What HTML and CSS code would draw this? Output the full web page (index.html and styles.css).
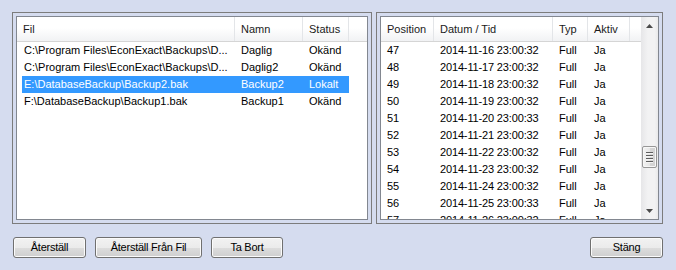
FILE: index.html
```html
<!DOCTYPE html>
<html>
<head>
<meta charset="utf-8">
<link rel="stylesheet" href="styles.css">
</head>
<body>
<div class="window">
  <div class="panels">
    <div class="panel panel-left">
      <div class="list">
        <div class="header">
          <div class="hcell l1">Fil</div>
          <div class="hcell l2">Namn</div>
          <div class="hcell l3">Status</div>
          <div class="hfill"></div>
        </div>
        <div class="rows left-rows">
          <div class="row"><div class="cell r1">C:\Program Files\EconExact\Backups\D...</div><div class="cell r2">Daglig</div><div class="cell r3">Okänd</div></div>
          <div class="row"><div class="cell r1">C:\Program Files\EconExact\Backups\D...</div><div class="cell r2">Daglig2</div><div class="cell r3">Okänd</div></div>
          <div class="row selected"><div class="cell r1">E:\DatabaseBackup\Backup2.bak</div><div class="cell r2">Backup2</div><div class="cell r3">Lokalt</div></div>
          <div class="row"><div class="cell r1">F:\DatabaseBackup\Backup1.bak</div><div class="cell r2">Backup1</div><div class="cell r3">Okänd</div></div>
        </div>
      </div>
    </div>
    <div class="panel panel-right">
      <div class="list list-scroll">
        <div class="list-main">
          <div class="header">
            <div class="hcell p1">Position</div>
            <div class="hcell p2">Datum / Tid</div>
            <div class="hcell p3">Typ</div>
            <div class="hcell p4">Aktiv</div>
            <div class="hfill"></div>
          </div>
          <div class="rows right-rows">
            <div class="row"><div class="cell c1">47</div><div class="cell c2">2014-11-16 23:00:32</div><div class="cell c3">Full</div><div class="cell c4">Ja</div></div>
            <div class="row"><div class="cell c1">48</div><div class="cell c2">2014-11-17 23:00:32</div><div class="cell c3">Full</div><div class="cell c4">Ja</div></div>
            <div class="row"><div class="cell c1">49</div><div class="cell c2">2014-11-18 23:00:32</div><div class="cell c3">Full</div><div class="cell c4">Ja</div></div>
            <div class="row"><div class="cell c1">50</div><div class="cell c2">2014-11-19 23:00:32</div><div class="cell c3">Full</div><div class="cell c4">Ja</div></div>
            <div class="row"><div class="cell c1">51</div><div class="cell c2">2014-11-20 23:00:33</div><div class="cell c3">Full</div><div class="cell c4">Ja</div></div>
            <div class="row"><div class="cell c1">52</div><div class="cell c2">2014-11-21 23:00:32</div><div class="cell c3">Full</div><div class="cell c4">Ja</div></div>
            <div class="row"><div class="cell c1">53</div><div class="cell c2">2014-11-22 23:00:32</div><div class="cell c3">Full</div><div class="cell c4">Ja</div></div>
            <div class="row"><div class="cell c1">54</div><div class="cell c2">2014-11-23 23:00:32</div><div class="cell c3">Full</div><div class="cell c4">Ja</div></div>
            <div class="row"><div class="cell c1">55</div><div class="cell c2">2014-11-24 23:00:32</div><div class="cell c3">Full</div><div class="cell c4">Ja</div></div>
            <div class="row"><div class="cell c1">56</div><div class="cell c2">2014-11-25 23:00:33</div><div class="cell c3">Full</div><div class="cell c4">Ja</div></div>
            <div class="row"><div class="cell c1">57</div><div class="cell c2">2014-11-26 23:00:32</div><div class="cell c3">Full</div><div class="cell c4">Ja</div></div>
          </div>
        </div>
        <div class="scrollbar">
          <div class="sb-arrow">
            <svg width="7" height="4" viewBox="0 0 7 4"><path d="M3.5 0 L7 4 L0 4 Z" fill="#4a4a4a"/></svg>
          </div>
          <div class="sb-track">
            <div class="sb-space-top"></div>
            <div class="sb-thumb">
              <span class="grip"></span><span class="grip"></span><span class="grip"></span><span class="grip"></span>
            </div>
          </div>
          <div class="sb-arrow">
            <svg width="7" height="4" viewBox="0 0 7 4"><path d="M0 0 L7 0 L3.5 4 Z" fill="#4a4a4a"/></svg>
          </div>
        </div>
      </div>
    </div>
  </div>
  <div class="buttons">
    <div class="btn-group">
      <button class="btn b-aterstall">Återställ</button>
      <button class="btn b-fil">Återställ Från Fil</button>
      <button class="btn b-bort">Ta Bort</button>
    </div>
    <button class="btn b-stang">Stäng</button>
  </div>
</div>
</body>
</html>
```

FILE: styles.css
```css
html, body {
  margin: 0;
  padding: 0;
}
body {
  width: 676px;
  height: 270px;
  background: #d5dcef;
  font-family: "Liberation Sans", Arial, sans-serif;
  font-size: 11px;
  color: #000;
  overflow: hidden;
}
.window {
  padding: 12px 13px 0 12px;
}
.panels {
  display: flex;
  gap: 4px;
  height: 212px;
}
.panel {
  box-sizing: border-box;
  height: 212px;
  border: 1px solid #7c7c7c;
  padding: 3px;
}
.panel-left { width: 360px; }
.panel-right { width: 287px; }
.list {
  box-sizing: border-box;
  height: 100%;
  border: 1px solid #828790;
  background: #fff;
  overflow: hidden;
}
.list-scroll {
  display: flex;
}
.list-main {
  flex: 1;
  min-width: 0;
  overflow: hidden;
}
.header {
  display: flex;
  height: 25px;
  box-sizing: border-box;
  border-bottom: 1px solid #d5d5d5;
  background: linear-gradient(#ffffff 0%, #ffffff 45%, #f1f2f4 100%);
}
.hcell {
  box-sizing: border-box;
  height: 24px;
  line-height: 24px;
  padding-left: 6px;
  border-right: 1px solid #e3e5e8;
  white-space: nowrap;
  overflow: hidden;
  color: #1b1b1b;
}
.hfill { flex: 1; }
.l1 { width: 218px; }
.l2 { width: 68px; }
.l3 { width: 46px; }
.p1 { width: 53px; }
.p2 { width: 119px; }
.p3 { width: 35px; }
.p4 { width: 42px; }

.rows { display: flex; flex-direction: column; }
.row {
  display: flex;
  height: 17px;
  line-height: 17px;
  white-space: nowrap;
}
.left-rows .row { margin-left: 5px; width: 327px; }
.cell { box-sizing: border-box; overflow: hidden; }
.r1 { width: 213px; padding-left: 2px; }
.r2 { width: 68px; padding-left: 6px; }
.r3 { width: 46px; padding-left: 6px; }
.row.selected {
  background: #3399ff;
  color: #fff;
}
.c1 { width: 53px; padding-left: 6px; }
.c2 { width: 119px; padding-left: 6px; letter-spacing: -0.15px; }
.c3 { width: 35px; padding-left: 6px; }
.c4 { width: 42px; padding-left: 6px; }

.scrollbar {
  width: 17px;
  display: flex;
  flex-direction: column;
  background: linear-gradient(to right, #e6e6e8, #f2f2f3 40%, #f2f2f3 80%, #e9e9ea);
}
.sb-arrow {
  height: 17px;
  display: flex;
  align-items: center;
  justify-content: center;
}
.sb-track {
  flex: 1;
  display: flex;
  flex-direction: column;
}
.sb-space-top { height: 112px; }
.sb-thumb {
  box-sizing: border-box;
  margin: 0 1px;
  height: 22px;
  border: 1px solid #979797;
  border-radius: 2px;
  background: linear-gradient(to right, #f3f3f3, #e6e6e6 50%, #d6d6d6 51%, #d2d2d2);
  box-shadow: inset 0 0 0 1px #f7f7f7;
  display: flex;
  flex-direction: column;
  align-items: center;
  justify-content: center;
  gap: 1px;
}
.grip {
  display: block;
  width: 7px;
  height: 1px;
  background: #5e5e5e;
  border-bottom: 1px solid #f4f4f4;
}

.buttons {
  display: flex;
  justify-content: space-between;
  margin-top: 13px;
  padding-left: 1px;
}
.btn-group {
  display: flex;
  gap: 9px;
}
.btn {
  box-sizing: border-box;
  height: 21px;
  padding: 0;
  border: 1px solid #707070;
  border-radius: 3px;
  background: linear-gradient(#f2f2f2 0%, #ebebeb 50%, #dddddd 51%, #cfcfcf 100%);
  box-shadow: inset 0 0 0 1px #fbfbfb;
  font-family: "Liberation Sans", Arial, sans-serif;
  font-size: 11px;
  letter-spacing: -0.25px;
  color: #000;
  text-align: center;
  line-height: 19px;
}
.b-aterstall { width: 73px; }
.b-fil { width: 107px; }
.b-bort { width: 72px; }
.b-stang { width: 73px; }
```
